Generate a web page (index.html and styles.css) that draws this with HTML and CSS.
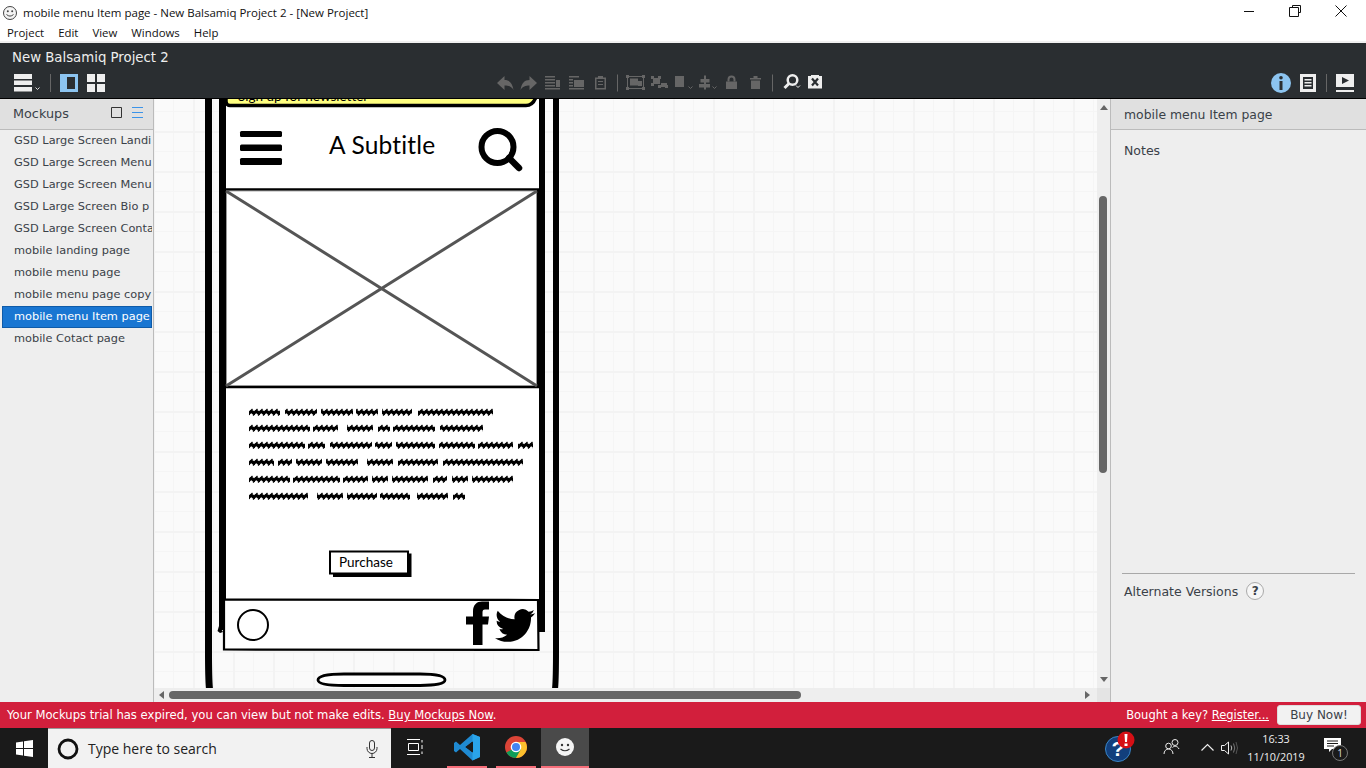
FILE: index.html
```html
<!DOCTYPE html>
<html lang="en">
<head>
<meta charset="UTF-8">
<title>mobile menu Item page - New Balsamiq Project 2 - [New Project]</title>
<link rel="stylesheet" href="styles.css">
</head>
<body>

<!-- Window title -->
<div class="titlebar">
    <svg class="title-icon" width="16" height="16" viewBox="0 0 16 16"><circle cx="8" cy="8" r="6.5" fill="#f4f4f4" stroke="#444"/><circle cx="5.8" cy="6.2" r="1" fill="#444"/><circle cx="10.2" cy="6.2" r="1" fill="#444"/><path d="M4.5 9.5q3.5 3.2 7 0" fill="none" stroke="#444"/></svg>
    <span class="title-text">mobile menu Item page - New Balsamiq Project 2 - [New Project]</span>
    <div class="window-controls">
        <svg width="12" height="12" viewBox="0 0 12 12"><path d="M1 6.500h10" stroke="#111"/></svg>
        <svg width="12" height="12" viewBox="0 0 12 12"><path d="M3.500 2.500v-2h8v7h-2M.5 2.500h9v9h-9z" fill="none" stroke="#111"/></svg>
        <svg width="12" height="12" viewBox="0 0 12 12"><path d="M.5.500l11 11M11.500.500l-11 11" stroke="#111"/></svg>
    </div>
</div>
<nav class="menubar">
    <a>Project</a><a>Edit</a><a>View</a><a>Windows</a><a>Help</a>
</nav>

<!-- Dark toolbar -->
<div class="toolbar">
    <div class="project-name">New Balsamiq Project 2</div>
    <div class="tools">
        <svg class="tools-left" width="100" height="22" viewBox="10 72 100 22">
            <path d="M14 74h18v5H14zM14 80.500h18v4.500H14zM14 87h18v4.500H14z" fill="#eee"/>
            <path d="M35.500 87.500l2 2 2-2" fill="none" stroke="#ddd"/>
            <path d="M50.500 74v18" stroke="#666"/>
            <path d="M60 74h18v18H60z" fill="#8cc4f0"/><path d="M67 77h8v12h-8z" fill="#2a2e31"/>
            <path d="M87 74h8v8h-8zM97 74h8v8h-8zM87 84h8v8h-8zM97 84h8v8h-8z" fill="#eee"/>
        </svg>
        <svg class="tools-mid" width="340" height="22" viewBox="490 72 340 22">
            <g fill="#666">
                <path d="M497 83l7.500-7v4c5 0 8 3 9 10-2-3.500-5-4.500-9-4.500v4.500z"/>
                <path d="M537 83l-7.500-7v4c-5 0-8 3-9 10 2-3.500 5-4.500 9-4.500v4.500z"/>
                <path d="M545 76h10v1.500h-10zM545 79h10v1.500h-10zM545 82h10v1.500h-10zM545 85h10v1.500h-10zM545 88h15v1.500h-15zM556 80h4v7h-4z"/>
                <path d="M569 76h10v1.500h-10zM569 79h4v1.500h-4zM569 82h4v1.500h-4zM569 85h4v1.500h-4zM569 88h15v1.500h-15zM574 80h10v7h-10z"/>
                <path d="M595 77.500h3v-1.500h5v1.500h3V89.500h-11zM596.500 79v9h8v-9z"/><path d="M598 81h5v1h-5zM598 84h5v1h-5z"/>
                <path d="M617 74.500h1v17h-1zM772 74.500h1v17h-1z"/>
                <!-- group -->
                <path d="M626 75h3v3h-3zM642 75h3v3h-3zM626 87h3v3h-3zM642 87h3v3h-3z"/>
                <path d="M630 78.500h8v7h-8zM638 81h4v5h-4z"/>
                <!-- ungroup -->
                <path d="M651 76h3v3h-3zM658 76h3v3h-3zM651 83h3v3h-3zM665 85h3v3h-3zM658 85h3v3h-3z"/>
                <path d="M653 78h7v6h-7zM661 83h6v4h-6z"/>
                <!-- arrange -->
                <path d="M675 76h9v11h-9z"/>
                <!-- align -->
                <path d="M704 75.500h2v14h-2zM700.500 79h9v3.500h-9zM699 84h11v3.500h-11z"/>
                <!-- lock -->
                <path d="M726 81.500h11v7.500h-11z"/><path d="M727.500 81.500v-2a4 4 0 018 0v2h-2v-2a2 2 0 00-4 0v2z"/>
                <!-- trash -->
                <path d="M750 78h11v1.500h-11zM753.500 76h4v2h-4zM751 80.500h9v8.500h-9z"/>
            </g>
            <g fill="none" stroke="#666">
                <path d="M627.500 76.500h16v12h-16z"/>
                <path d="M688.500 86.500l2 2 2-2M712.500 86.500l2 2 2-2"/>
            </g>
            <path d="M796 85.500l2 2 2-2" fill="none" stroke="#eee"/>
            <circle cx="792.500" cy="80" r="4.800" fill="none" stroke="#eee" stroke-width="2.500"/>
            <path d="M789 83.500l-4.500 4.500" stroke="#eee" stroke-width="3"/>
            <path d="M808 76h3v-1h8v1h3v12.500h-14z" fill="#eee"/>
            <path d="M812 78.500l6 7M818 78.500l-6 7" stroke="#2a2e31" stroke-width="2.200"/>
        </svg>
        <svg class="tools-right" width="96" height="22" viewBox="1268 72 96 22">
            <circle cx="1281" cy="83" r="10" fill="#8cc4f0"/>
            <circle cx="1281" cy="77.800" r="1.800" fill="#2a2e31"/><path d="M1279.500 81h3v9h-3z" fill="#2a2e31"/>
            <path d="M1300 74h16v18h-16z" fill="#eee"/>
            <path d="M1303 77h10v12h-10z" fill="#2a2e31"/>
            <path d="M1304.500 79h7v1.500h-7zM1304.500 82h7v1.500h-7zM1304.500 85h7v1.500h-7z" fill="#eee"/>
            <path d="M1326.500 74v18" stroke="#666"/>
            <path d="M1336 74h18v13h-18zM1336 90h18v2h-18z" fill="#eee"/>
            <path d="M1342 77l7 3.500-7 3.500z" fill="#2a2e31"/>
        </svg>
    </div>
</div>

<div class="workspace">
    <!-- Mockups list -->
    <aside class="mockups">
        <div class="panel-head">
            <span class="head-label">Mockups</span>
            <svg class="head-icons" width="36" height="14" viewBox="0 0 36 14"><path d="M.500 1.500h10v10H.500z" fill="none" stroke="#333"/><path d="M21 1.500h11M21 6.500h11M21 11.500h11" stroke="#3b93e8"/></svg>
        </div>
        <ul class="mockup-list">
            <li>GSD Large Screen Landi</li>
            <li>GSD Large Screen Menu</li>
            <li>GSD Large Screen Menu</li>
            <li>GSD Large Screen Bio p</li>
            <li>GSD Large Screen Conta</li>
            <li>mobile landing page</li>
            <li>mobile menu page</li>
            <li>mobile menu page copy</li>
            <li class="selected">mobile menu Item page</li>
            <li>mobile Cotact page</li>
        </ul>
    </aside>

    <!-- Canvas with the sketched phone -->
    <main class="canvas-area">
        <div class="canvas-row">
            <div class="canvas">
                <svg class="sketch" width="420" height="590" viewBox="190 99 420 590">
                    <defs>
                        <pattern id="squiggle" width="5" height="8" patternUnits="userSpaceOnUse">
                            <path d="M-1 5C1 3 2 3.500 3 4.500S5 5 6 3.500" fill="none" stroke="#000" stroke-width="3.200"/>
                            <path d="M.5 3L2.500 1M3 7.500L5 5.500" stroke="#000" stroke-width="1.300"/>
                        </pattern>
                        <filter id="soft" x="-5%" y="-20%" width="110%" height="140%"><feGaussianBlur stdDeviation=".4"/></filter>
                    </defs>
                    <!-- phone body -->
                    <g fill="none" stroke="#000">
                        <path d="M208.500 99V650c0 18 0 30 1 39" stroke-width="7"/>
                        <path d="M556 99V650c0 18 0 30 -1 39" stroke-width="6"/>
                        <path d="M222.500 99V630" stroke-width="7"/>
                        <path d="M542 99V632" stroke-width="6"/>
                    </g>
                    <path d="M219 626l-1.500 5 2.500 2 3-1z" fill="#000"/>
                    <rect x="226" y="99" width="313" height="90" fill="#fff"/>
                    <rect x="226" y="388" width="313" height="212" fill="#fff"/>
                    <!-- newsletter banner -->
                    <path d="M226 97v4.500c0 2.500 2 4 4 4H526c4 0 8-3 10-8.500z" fill="#ffff80" stroke="#000" stroke-width="3.500"/>
                    <text class="sk-text" x="238" y="101" font-size="13.500">Sign up for newsletter</text>
                    <!-- header -->
                    <g fill="#000">
                        <rect x="240" y="131" width="42" height="6" rx="1.500"/>
                        <rect x="240" y="144.500" width="42" height="6.500" rx="1.500"/>
                        <rect x="240" y="158" width="42" height="7" rx="1.500"/>
                    </g>
                    <text class="sk-text subtitle" x="329" y="154" font-size="24.500">A Subtitle</text>
                    <circle cx="497.500" cy="147" r="16" fill="none" stroke="#000" stroke-width="6"/>
                    <path d="M509 158l10 10" stroke="#000" stroke-width="6.500" stroke-linecap="round"/>
                    <!-- image placeholder -->
                    <rect x="225" y="189.500" width="313" height="197.500" fill="#fff" stroke="#000" stroke-width="2.500"/>
                    <rect x="226.500" y="191" width="310" height="194.500" fill="none" stroke="#888" stroke-width=".7"/>
                    <path d="M226 191L537 386M537 191L226 386" stroke="#555" stroke-width="3"/>
                    <!-- squiggled body text -->
                    <g fill="url(#squiggle)" filter="url(#soft)">
                        <g transform="translate(0 408)"><rect x="249" width="31" height="8"/><rect x="285" width="32" height="8"/><rect x="321" width="32" height="8"/><rect x="356" width="22" height="8"/><rect x="382" width="30" height="8"/><rect x="418" width="75" height="8"/></g>
                        <g transform="translate(0 424)"><rect x="249" width="61" height="8"/><rect x="313" width="25" height="8"/><rect x="347" width="26" height="8"/><rect x="378" width="12" height="8"/><rect x="393" width="42" height="8"/><rect x="440" width="43" height="8"/></g>
                        <g transform="translate(0 441)"><rect x="249" width="56" height="8"/><rect x="308" width="17" height="8"/><rect x="330" width="42" height="8"/><rect x="375" width="17" height="8"/><rect x="396" width="39" height="8"/><rect x="439" width="36" height="8"/><rect x="478" width="35" height="8"/><rect x="518" width="15" height="8"/></g>
                        <g transform="translate(0 458)"><rect x="249" width="25" height="8"/><rect x="278" width="14" height="8"/><rect x="296" width="26" height="8"/><rect x="326" width="32" height="8"/><rect x="367" width="26" height="8"/><rect x="398" width="40" height="8"/><rect x="443" width="80" height="8"/></g>
                        <g transform="translate(0 475)"><rect x="249" width="41" height="8"/><rect x="293" width="47" height="8"/><rect x="343" width="25" height="8"/><rect x="372" width="16" height="8"/><rect x="392" width="36" height="8"/><rect x="433" width="14" height="8"/><rect x="452" width="16" height="8"/><rect x="472" width="41" height="8"/></g>
                        <g transform="translate(0 492)"><rect x="249" width="59" height="8"/><rect x="317" width="26" height="8"/><rect x="347" width="30" height="8"/><rect x="380" width="30" height="8"/><rect x="417" width="31" height="8"/><rect x="453" width="12" height="8"/></g>
                    </g>
                    <!-- purchase button -->
                    <path d="M333 575.500h77v-22" fill="none" stroke="#000" stroke-width="3"/>
                    <rect x="330" y="551.500" width="78" height="22" fill="#fff" stroke="#000" stroke-width="2"/>
                    <text class="sk-text" x="339" y="567" font-size="13.500">Purchase</text>
                    <!-- footer -->
                    <path d="M224 599.500L538 600L538.500 650L224 649.500z" fill="#fff" stroke="#000" stroke-width="2.200"/>
                    <circle cx="253" cy="625" r="15" fill="#fff" stroke="#000" stroke-width="2"/>
                    <path d="M473 645V624.500h-7v-8h7v-5c0-7 4-10 9-10h7v8h-4c-2 0-2.500 1-2.500 3v4h6.500l-1 8h-5.500V645z" fill="#000"/>
                    <path transform="translate(495 605.500) scale(1.670)" d="M23.953 4.570a10 10 0 01-2.825.775 4.958 4.958 0 002.163-2.723c-.951.555-2.005.959-3.127 1.184a4.920 4.920 0 00-8.384 4.482C7.690 8.095 4.067 6.130 1.640 3.162a4.822 4.822 0 00-.666 2.475c0 1.710.870 3.213 2.188 4.096a4.904 4.904 0 01-2.228-.616v.060a4.923 4.923 0 003.946 4.827 4.996 4.996 0 01-2.212.085 4.936 4.936 0 004.604 3.417 9.867 9.867 0 01-6.102 2.105c-.390 0-.779-.023-1.170-.067a13.995 13.995 0 007.557 2.209c9.053 0 13.998-7.496 13.998-13.985 0-.210 0-.420-.015-.630A9.935 9.935 0 0024 4.590z" fill="#000"/>
                    <!-- home button -->
                    <path d="M318 680c0-4 10-6 26-6h76c16 0 25 2 25 6s-9 5-25 5.500h-76c-16 0-26-1.500-26-5.500z" fill="#fff" stroke="#000" stroke-width="2.800"/>
                </svg>
            </div>
            <div class="vscroll">
                <span class="arrow-up"></span>
                <div class="vtrack"><div class="vthumb"></div></div>
                <span class="arrow-down"></span>
            </div>
        </div>
        <div class="hscroll">
            <span class="arrow-left"></span>
            <div class="htrack"><div class="hthumb"></div></div>
            <span class="arrow-right"></span>
            <span class="corner"></span>
        </div>
    </main>

    <!-- Right panel -->
    <aside class="inspector">
        <div class="panel-head inspector-head">mobile menu Item page</div>
        <div class="notes">Notes</div>
        <div class="versions">
            <span>Alternate Versions</span>
            <span class="help-dot">?</span>
        </div>
    </aside>
</div>

<!-- Trial notice -->
<div class="trial-bar">
    <span>Your Mockups trial has expired, you can view but not make edits. <a>Buy Mockups Now</a>.</span>
    <span class="trial-right">Bought a key? <a>Register...</a></span>
    <button class="buy-btn">Buy Now!</button>
</div>

<!-- Windows taskbar -->
<div class="taskbar">
    <div class="start">
        <svg width="17" height="17" viewBox="0 0 17 17"><path d="M0 2.400L7 1.400V8H0zM8 1.200L17 0V8H8zM0 9h7v6.600L0 14.600zM8 9h9v8L8 15.800z" fill="#fff"/></svg>
    </div>
    <div class="search-box">
        <svg width="22" height="22" viewBox="0 0 22 22"><circle cx="11" cy="11" r="9" fill="none" stroke="#111" stroke-width="2.800"/></svg>
        <span class="search-text">Type here to search</span>
        <svg class="mic" width="12" height="18" viewBox="0 0 12 18"><rect x="3.500" y=".5" width="5" height="10" rx="2.500" fill="none" stroke="#333"/><path d="M1 7v1.500a5 5 0 0010 0V7M6 13.500V17M3 17.500h6" fill="none" stroke="#333"/></svg>
    </div>
    <div class="task-apps">
        <div class="task-item plain">
            <svg width="18" height="16" viewBox="0 0 18 16"><path d="M2.500 4.500h10v7h-10zM1 .5h13M1 15.500h13M16 1v2.500M16 6v4M16 12.500V15" fill="none" stroke="#fff"/></svg>
        </div>
        <div class="task-item open">
            <svg width="26" height="28" viewBox="0 0 26 28"><path d="M18.500 1L26 4v20l-7.500 3.500L6 16l-4 3.500L0 18V10l2-1.500 4 3.500zM18.500 8.500L11.500 14l7 5.500z" fill="#1f8ad2"/><path d="M18.500 1L26 4v20l-7.500 3.500z" fill="#2aa4ea"/><path d="M19 8.500L11.500 14l7.500 5.500z" fill="#1a1a1a"/></svg>
        </div>
        <div class="task-item open">
            <svg width="22" height="22" viewBox="0 0 22 22">
                <circle cx="11" cy="11" r="11" fill="#db4437"/>
                <path d="M11 11L1.500 16.500A11 11 0 0011 22l5.500-9z" fill="#0f9d58"/>
                <path d="M11 6h9.500A11 11 0 0122 11a11 11 0 01-11 11l5-9z" fill="#fbc02d"/>
                <circle cx="11" cy="11" r="5.300" fill="#fff"/><circle cx="11" cy="11" r="4" fill="#4285f4"/>
            </svg>
        </div>
        <div class="task-item open active">
            <svg width="20" height="20" viewBox="0 0 20 20"><circle cx="10" cy="10" r="9" fill="#f4f4f4"/><circle cx="7" cy="8" r="1.200" fill="#333"/><circle cx="13" cy="8" r="1.200" fill="#333"/><path d="M5.500 12q4.500 3.500 9 0" fill="none" stroke="#333" stroke-width="1.200"/></svg>
        </div>
    </div>
    <div class="tray">
        <svg class="tray-help" width="30" height="32" viewBox="0 0 30 32">
            <circle cx="13" cy="18" r="12.500" fill="#123f7c" stroke="#3a86c8"/>
            <text x="13" y="25" class="tray-q">?</text>
            <circle cx="21" cy="9" r="8.500" fill="#d50f15"/>
            <path d="M19.500 3h3l-.5 8h-2zM19.500 12.500h3v2.500h-3z" fill="#fff"/>
        </svg>
        <svg class="tray-people" width="18" height="18" viewBox="0 0 18 18"><circle cx="12" cy="4.500" r="3" fill="none" stroke="#eee"/><circle cx="5.500" cy="8" r="2.800" fill="none" stroke="#eee"/><path d="M1 16c0-3 2-5 4.500-5S10 13 10 16M9.500 9.500c1-1.500 5-2 6.500 1.500" fill="none" stroke="#eee"/></svg>
        <svg class="tray-up" width="13" height="8" viewBox="0 0 13 8"><path d="M.5 7.500l6-6 6 6" fill="none" stroke="#eee" stroke-width="1.200"/></svg>
        <svg class="tray-sound" width="17" height="14" viewBox="0 0 17 14"><path d="M.5 4.500h3l4-3.500v12l-4-3.500h-3z" fill="none" stroke="#eee"/><path d="M10 4.500q1.500 2.500 0 5" fill="none" stroke="#bbb"/><path d="M12.500 2.500q2.500 4.500 0 9" fill="none" stroke="#777"/><path d="M15 1q3 6 0 12" fill="none" stroke="#555"/></svg>
        <div class="clock"><span>16:33</span><span>11/10/2019</span></div>
        <div class="notify">
            <svg width="17" height="14" viewBox="0 0 17 14"><path d="M0 0h17v11h-9l-3 3v-3H0z" fill="#fff"/><path d="M3 3h11M3 5.500h11M3 8h7" stroke="#1a1a1a"/></svg>
            <span class="notify-count">1</span>
        </div>
    </div>
</div>

</body>
</html>
```

FILE: styles.css
```css
:root {
    --dark-bar: #2a2e31;
    --panel-bg: #eeeeee;
    --panel-head: #e0e0e0;
    --panel-line: #bbbbbb;
    --ui-font: "DejaVu Sans", sans-serif;
    --win-font: "Open Sans", "Noto Sans", sans-serif;
    --ink: #3a4148;
}
* { box-sizing: border-box; }
html, body { height: 100%; }
body {
    margin: 0;
    width: 1366px;
    height: 768px;
    overflow: hidden;
    display: flex;
    flex-direction: column;
    background: #fff;
    font-family: var(--ui-font);
    color: var(--ink);
}
svg { display: block; flex: none; }

/* window chrome */
.titlebar {
    height: 25px;
    flex: none;
    display: flex;
    align-items: center;
    padding-left: 2px;
    font-family: var(--win-font);
    font-size: 11.500px;
    color: #111;
}
.title-text { margin-left: 5px; }
.window-controls {
    margin-left: auto;
    display: flex;
    gap: 34px;
    padding-right: 19px;
    margin-top: -4px;
}
.menubar {
    height: 18px;
    flex: none;
    display: flex;
    gap: 14px;
    padding: 0 0 2px 7px;
    align-items: center;
    font-family: var(--win-font);
    font-size: 11.400px;
    color: #111;
    border-bottom: 2px solid #f0f0f0;
}

/* toolbar */
.toolbar {
    height: 56px;
    flex: none;
    background: var(--dark-bar);
    border-bottom: 1px solid #000;
    color: #eee;
    position: relative;
}
.project-name {
    font-size: 13.300px;
    padding: 7px 0 0 12px;
    line-height: 16px;
}
.tools {
    display: flex;
    padding-top: 6px;
}
.tools-left { margin-left: 10px; }
.tools-mid { margin-left: 380px; }
.tools-right { margin-left: 438px; }

/* main area */
.workspace {
    flex: 1;
    display: flex;
    min-height: 0;
}
.panel-head {
    height: 31px;
    background: var(--panel-head);
    border-bottom: 1px solid var(--panel-line);
    display: flex;
    align-items: center;
    padding-left: 13px;
    font-size: 12.400px;
}
.head-label { font-size: 12.800px; margin-top: -2px; }
.head-icons { margin-left: auto; margin-right: 6px; margin-top: -2px; }
.mockups {
    width: 154px;
    flex: none;
    background: var(--panel-bg);
    border-right: 1px solid var(--panel-line);
}
.mockup-list {
    list-style: none;
    margin: 0;
    padding: 0;
    font-size: 11.350px;
}
.mockup-list li {
    height: 22px;
    line-height: 21px;
    padding: 0 0 0 14px;
    margin-right: 1px;
    white-space: nowrap;
    overflow: hidden;
}
.mockup-list .selected {
    background: #1976d2;
    color: #fff;
    margin-left: 2px;
    padding-left: 11px;
    border: 1px solid #0f5ba8;
    line-height: 19px;
}

/* canvas and scroll bars */
.canvas-area {
    flex: 1;
    min-width: 0;
    display: flex;
    flex-direction: column;
}
.canvas-row {
    flex: 1;
    min-height: 0;
    display: flex;
}
.canvas {
    flex: 1;
    position: relative;
    overflow: hidden;
    background-color: #fafafa;
    background-image:
        linear-gradient(to right, #f3f3f3 2px, transparent 2px),
        linear-gradient(to bottom, #f3f3f3 2px, transparent 2px),
        linear-gradient(to right, #f5f5f5 1px, transparent 1px),
        linear-gradient(to bottom, #f5f5f5 1px, transparent 1px);
    background-size: 40px 40px, 40px 40px, 20px 20px, 20px 20px;
    background-position: 39px 32px, 39px 32px, 19px 12px, 19px 12px;
}
.sketch {
    position: absolute;
    left: 36px;
    top: 0;
}
.sk-text {
    font-family: Lato, sans-serif;
    font-variant-ligatures: none;
    fill: #000;
}
.subtitle { letter-spacing: .2px; }
.vscroll {
    width: 13px;
    flex: none;
    background: var(--panel-bg);
    display: flex;
    flex-direction: column;
    align-items: center;
}
.vtrack { flex: 1; width: 100%; padding-top: 86px; }
.vthumb {
    width: 8px;
    height: 277px;
    margin-left: 2px;
    background: #666;
    border-radius: 4px;
}
.arrow-up, .arrow-down, .arrow-left, .arrow-right {
    width: 0;
    height: 0;
    flex: none;
    border-style: solid;
    border-color: transparent;
}
.arrow-up { border-width: 0 4px 5px; border-bottom-color: #666; margin-top: 6px; }
.arrow-down { border-width: 5px 4px 0; border-top-color: #666; margin-bottom: 6px; }
.hscroll {
    height: 14px;
    flex: none;
    background: var(--panel-bg);
    display: flex;
    align-items: center;
}
.arrow-left { border-width: 4px 5px 4px 0; border-right-color: #666; margin-left: 5px; }
.arrow-right { border-width: 4px 0 4px 5px; border-left-color: #666; margin-right: 7px; }
.htrack { flex: 1; padding-left: 5px; }
.hthumb {
    width: 632px;
    height: 8px;
    background: #666;
    border-radius: 4px;
}
.corner {
    width: 13px;
    height: 14px;
    background: #e4e4e4;
}

/* right panel */
.inspector {
    width: 256px;
    flex: none;
    background: var(--panel-bg);
    border-left: 1px solid var(--panel-line);
    display: flex;
    flex-direction: column;
}
.notes {
    font-size: 12.500px;
    padding: 13px 0 0 13px;
}
.versions {
    margin: 415px 11px 0;
    border-top: 1px solid #a8a8a8;
    padding: 8px 0 0 2px;
    display: flex;
    align-items: center;
    gap: 8px;
    font-size: 12.500px;
}
.help-dot {
    width: 18px;
    height: 18px;
    border: 1px solid #aaa;
    border-radius: 50%;
    background: #f6f6f6;
    display: flex;
    align-items: center;
    justify-content: center;
    font-size: 12px;
    font-weight: bold;
}

/* trial notice */
.trial-bar {
    height: 26px;
    flex: none;
    background: #d21f3c;
    color: #fff;
    display: flex;
    align-items: center;
    padding: 0 5px 0 7px;
    font-size: 11.620px;
}
.trial-bar a { text-decoration: underline; }
.trial-right { margin-left: auto; font-size: 11.500px; }
.buy-btn {
    width: 84px;
    height: 20px;
    margin-left: 8px;
    padding: 0;
    background: #f2f2f2;
    border: 1px solid #ddd;
    border-radius: 3px;
    font-family: var(--ui-font);
    font-size: 12px;
    color: var(--ink);
}

/* taskbar */
.taskbar {
    height: 40px;
    flex: none;
    background: #1a1a1a;
    display: flex;
    color: #eee;
    font-family: var(--win-font);
}
.start {
    width: 48px;
    display: flex;
    align-items: center;
    justify-content: center;
}
.search-box {
    width: 343px;
    background: #f2f2f2;
    border-top: 1px solid #999;
    display: flex;
    align-items: center;
    padding-left: 9px;
    color: #222;
    font-size: 14px;
}
.search-text { margin-left: 9px; }
.mic { margin-left: auto; margin-right: 13px; }
.task-apps {
    display: flex;
    padding-left: 4px;
}
.task-item {
    width: 48px;
    display: flex;
    align-items: center;
    justify-content: center;
    border-bottom: 2px solid transparent;
}
.task-item.plain { width: 40px; margin-right: 12px; }
.task-item.open {
    width: 40px;
    margin-right: 9px;
    border-bottom-color: #f76e7a;
}
.task-item.active {
    width: 48px;
    margin: 0 0 0 -4px;
    background: #4a4a4a;
}
.tray {
    flex: 1;
    display: flex;
    align-items: center;
    position: relative;
}
.tray-help { margin-left: 516px; margin-top: -3px; }
.tray-q {
    font-family: "Liberation Sans", sans-serif;
    font-size: 21px;
    font-weight: bold;
    fill: #fff;
    text-anchor: middle;
}
.tray-people { margin-left: 28px; margin-top: -3px; }
.tray-up { margin-left: 20px; margin-top: -3px; }
.tray-sound { margin-left: 7px; }
.clock {
    width: 76px;
    margin-left: 0;
    display: flex;
    flex-direction: column;
    align-items: center;
    font-size: 10.800px;
    line-height: 18px;
}
.notify {
    position: relative;
    margin-left: 10px;
    margin-top: -7px;
}
.notify-count {
    position: absolute;
    left: 8px;
    top: 7px;
    width: 16px;
    height: 16px;
    border: 1px solid #777;
    border-radius: 50%;
    background: #1a1a1a;
    color: #ddd;
    font-size: 10px;
    line-height: 14px;
    text-align: center;
}
```
